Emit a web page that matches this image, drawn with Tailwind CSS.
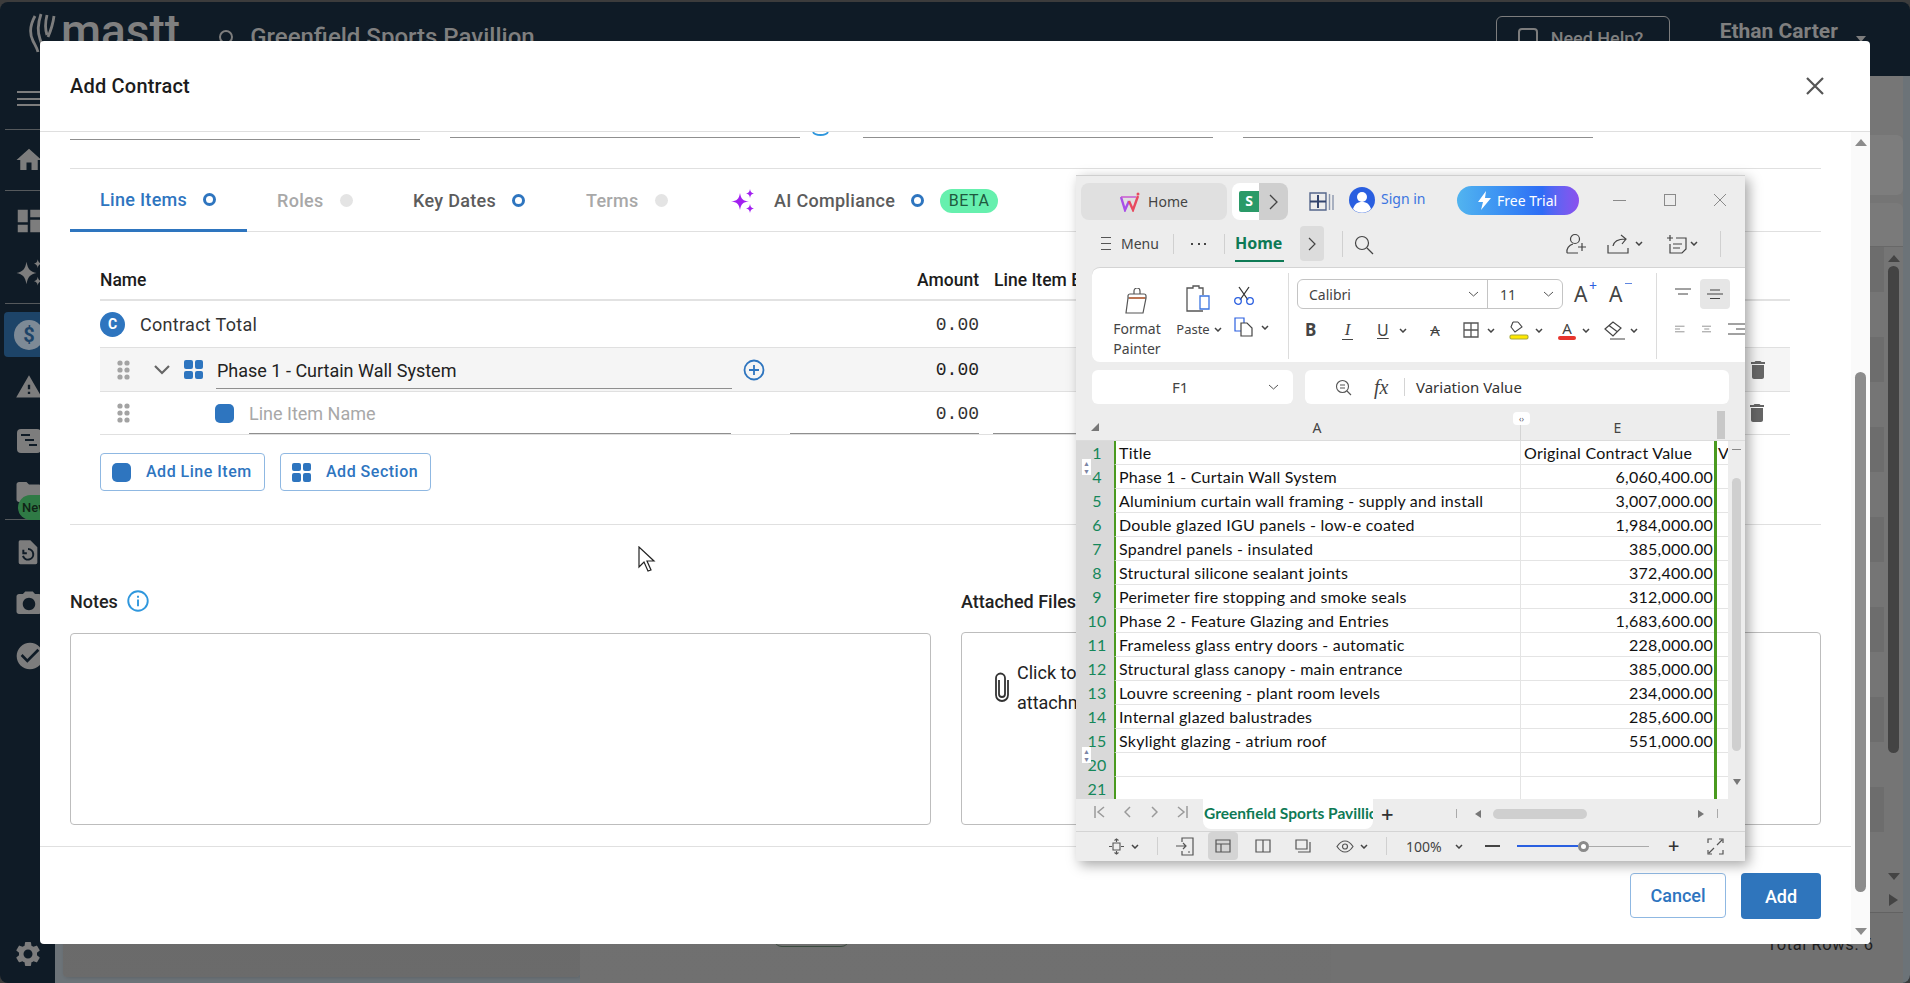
<!DOCTYPE html>
<html lang="en">
  <head>
    <meta charset="UTF-8" />
    <title>Add Contract</title>
    <script src="https://cdn.jsdelivr.net/npm/@tailwindcss/browser@4"></script>
  </head>
  <body class="relative w-[1910px] h-[983px] overflow-hidden bg-[#3c3c3c] pt-[2px] font-[Roboto,sans-serif]">
    <!-- App behind the modal, dimmed -->
    <div class="h-[981px] flex flex-col rounded-lg overflow-hidden bg-[#0f1b26]">
      <header class="h-[74px] shrink-0 flex text-[#7f7f7f]">
        <svg class="ml-[29px] mt-[11px] w-[27px] h-[42px]" viewBox="0 0 27 42" fill="none" stroke="#7d7d7d" stroke-width="2.800">
          <path d="M6 3C1 12 0 20 4 28c2 4 4 7 5 11" />
          <path d="M12 1c-3 9-4 17-1 25l3 9" />
          <path d="M18 2c-2 8-2 14 0 20" />
          <path d="M25 3c-1 8-3 14-6 21" />
        </svg>
        <div class="ml-[5px] mt-[3px] text-[46px] leading-[52px] font-medium">mastt</div>
        <svg class="ml-[38px] mt-[27px] w-[17px] h-[20px]" viewBox="0 0 17 20" fill="none" stroke="#7d7d7d" stroke-width="2"><circle cx="8" cy="8" r="6" /><path d="M12 13l3 5" /></svg>
        <div class="ml-[15px] mt-[20px] text-[24px] leading-[30px] font-medium">Greenfield Sports Pavillion</div>
        <div class="ml-[961px] mt-[14px] w-[174px] h-[60px] border border-[#7d7d7d] rounded-md flex pl-[21px] pt-[11px]">
          <div class="w-[20px] h-[20px] border-2 border-[#7d7d7d] rounded-sm"></div>
          <div class="ml-[13px] text-[18px] leading-[22px] font-medium">Need Help?</div>
        </div>
        <div class="ml-[50px] mt-[17px] text-[21px] leading-[24px] font-bold whitespace-nowrap">Ethan Carter</div>
        <div class="ml-[18px] mt-[34px] w-0 h-0 border-x-[5px] border-x-transparent border-t-[6px] border-t-[#7d7d7d]"></div>
      </header>
      <div class="flex-1 flex min-h-0">
        <nav class="w-[55px] shrink-0 flex flex-col text-[#7d7d7d] pl-[5px]">
          <div class="h-[53px] pl-[12px] pt-[15px]"><div class="w-[26px] h-[15px] border-y-2 border-[#7d7d7d] flex items-center"><div class="w-full h-[2px] bg-[#7d7d7d]"></div></div></div>
          <div class="h-[61px] border-t border-[#55595c] flex items-center pl-[9px]"><svg class="w-[30px] h-[30px]" viewBox="0 0 24 24" fill="#7d7d7d"><path d="M10 20v-6h4v6h5v-8h3L12 3 2 12h3v8z" /></svg></div>
          <div class="h-[113px] border-t border-[#55595c] flex flex-col pl-[9px]">
            <svg class="mt-[15px] w-[30px] h-[30px]" viewBox="0 0 24 24" fill="#7d7d7d"><path d="M3 13h8V3H3v10zm0 8h8v-6H3v6zm10 0h8V11h-8v10zm0-18v6h8V3h-8z" /></svg>
            <svg class="mt-[22px] w-[30px] h-[30px]" viewBox="0 0 24 24" fill="#7d7d7d"><path d="M10 3c1 6 3 8 8 9-5 1-7 3-8 9-1-6-3-8-8-9 5-1 7-3 8-9zM19 1c.4 2.200 1 3 3 3.500-2 .5-2.600 1.300-3 3.500-.4-2.200-1-3-3-3.500 2-.5 2.600-1.300 3-3.500zM19 15c.4 2.200 1 3 3 3.500-2 .5-2.600 1.300-3 3.500-.4-2.200-1-3-3-3.500 2-.5 2.600-1.300 3-3.500z" /></svg>
          </div>
          <div class="h-[216px] border-t border-[#55595c] flex flex-col">
            <div class="mt-[8px] -ml-[1px] h-[45px] rounded-l bg-[#1d4468] flex items-center pl-[10px]"><div class="w-[30px] h-[30px] rounded-full bg-[#7d8a96] flex items-center justify-center text-[20px] font-bold text-[#1d4468]">$</div></div>
            <svg class="mt-[16px] ml-[9px] w-[30px] h-[28px]" viewBox="0 0 24 24" fill="#7d7d7d"><path d="M1 21h22L12 2 1 21zm12-3h-2v-2h2v2zm0-4h-2v-4h2v4z" /></svg>
            <div class="mt-[28px] ml-[12px] w-[24px] h-[24px] rounded bg-[#7d7d7d] flex flex-col gap-[3px] pl-[4px] pt-[5px]"><div class="w-[9px] h-[2px] bg-[#0f1b26]"></div><div class="ml-[4px] w-[9px] h-[2px] bg-[#0f1b26]"></div><div class="ml-[8px] w-[8px] h-[2px] bg-[#0f1b26]"></div></div>
            <div class="relative mt-[24px] ml-[9px] h-[36px]">
              <svg class="w-[30px] h-[30px]" viewBox="0 0 24 24" fill="#7d7d7d"><path d="M10 4H4c-1.100 0-1.990.9-1.990 2L2 18c0 1.100.9 2 2 2h16c1.100 0 2-.9 2-2V8c0-1.100-.9-2-2-2h-8l-2-2z" /></svg>
              <div class="absolute left-[4px] top-[18px] w-[34px] h-[25px] rounded-full bg-[#2f7a45] text-[13px] leading-[25px] font-medium text-center text-[#0f2416]">New</div>
            </div>
          </div>
          <div class="border-t border-[#55595c] flex flex-col pl-[9px]">
            <svg class="mt-[18px] w-[28px] h-[28px]" viewBox="0 0 24 24" fill="#7d7d7d"><path d="M5 2h9l6 6v13a1.500 1.500 0 0 1-1.500 1.500h-13A1.500 1.500 0 0 1 4 21V3.500A1.500 1.500 0 0 1 5 2z" /><path d="M12 9.500a4.500 4.500 0 1 1-4.300 5.800M8 10v3h3" fill="none" stroke="#0f1b26" stroke-width="1.700" /></svg>
            <svg class="mt-[23px] w-[30px] h-[30px]" viewBox="0 0 24 24" fill="#7d7d7d"><path d="M9 2 7.170 4H4c-1.100 0-2 .9-2 2v12c0 1.100.9 2 2 2h16c1.100 0 2-.9 2-2V6c0-1.100-.9-2-2-2h-3.170L15 2H9zm3 15c-2.760 0-5-2.240-5-5s2.240-5 5-5 5 2.240 5 5-2.240 5-5 5z" /></svg>
            <svg class="mt-[21px] w-[32px] h-[32px]" viewBox="0 0 24 24" fill="#7d7d7d"><path d="M12 2C6.480 2 2 6.480 2 12s4.480 10 10 10 10-4.480 10-10S17.520 2 12 2zm-2 15l-5-5 1.410-1.410L10 14.170l7.590-7.590L19 8l-9 9z" /></svg>
          </div>
          <svg class="mt-auto mb-[14px] ml-[8px] w-[30px] h-[30px]" viewBox="0 0 24 24" fill="#7d7d7d"><path d="M19.140 12.940c.04-.3.06-.61.06-.94 0-.32-.02-.64-.07-.94l2.030-1.580a.49.49 0 0 0 .12-.61l-1.920-3.320a.488.488 0 0 0-.59-.22l-2.390.96c-.5-.38-1.030-.7-1.620-.94l-.36-2.540a.484.484 0 0 0-.48-.41h-3.840c-.24 0-.43.17-.47.41l-.36 2.540c-.59.24-1.130.57-1.620.94l-2.390-.96c-.22-.08-.47 0-.59.22L2.740 8.870c-.12.21-.08.47.12.61l2.030 1.580c-.05.3-.09.63-.09.94s.02.64.07.94l-2.030 1.580a.49.49 0 0 0-.12.61l1.920 3.320c.12.22.37.29.59.22l2.390-.96c.5.38 1.030.7 1.620.94l.36 2.540c.05.24.24.41.48.41h3.840c.24 0 .44-.17.47-.41l.36-2.540c.59-.24 1.130-.56 1.620-.94l2.390.96c.22.08.47 0 .59-.22l1.920-3.320c.12-.22.07-.47-.12-.61l-2.010-1.580zM12 15.600c-1.980 0-3.600-1.620-3.600-3.600s1.620-3.600 3.600-3.600 3.600 1.620 3.600 3.600-1.620 3.600-3.600 3.600z" /></svg>
        </nav>
        <main class="flex-1 flex bg-[#6c7378] min-w-0">
          <div class="w-[517px] mb-[6px] ml-[8px] rounded-b bg-gradient-to-b from-[#5a5a5a] to-[#6b6b6b] shadow-[2px_0_4px_rgba(0,0,0,0.2)]"></div>
          <div class="w-[751px] flex flex-col bg-gradient-to-b from-[#6a6a6a] to-[#707070]">
            <div class="mt-[846px] ml-[194px] w-[75px] h-[25px] rounded-b-lg border-b border-[#3a4a3e]"></div>
          </div>
          <div class="w-[572px] bg-[#757575] flex flex-col">
            <div class="h-[59px] shrink-0 bg-[#767676]"></div>
            <div class="h-[60px] shrink-0 bg-[#7d7d7d] rounded-r-md"></div>
            <div class="mt-[8px] h-[44px] shrink-0 bg-[#7a7a7a] rounded-tr-md border-b border-[#686868]"></div>
            <div class="flex-1 flex min-h-0 overflow-hidden">
              <div class="flex-1 flex flex-col">
                <div class="h-[45px] shrink-0 bg-[#6d6d6d]"></div><div class="h-[45px] shrink-0"></div>
                <div class="h-[45px] shrink-0 bg-[#6d6d6d]"></div><div class="h-[45px] shrink-0"></div>
                <div class="h-[45px] shrink-0 bg-[#6d6d6d]"></div><div class="h-[45px] shrink-0"></div>
                <div class="h-[45px] shrink-0 bg-[#6d6d6d]"></div><div class="h-[45px] shrink-0"></div>
                <div class="h-[45px] shrink-0 bg-[#6d6d6d]"></div><div class="h-[45px] shrink-0"></div>
                <div class="h-[45px] shrink-0 bg-[#6d6d6d]"></div><div class="h-[45px] shrink-0"></div>
                <div class="h-[45px] shrink-0 bg-[#6d6d6d]"></div><div class="h-[45px] shrink-0"></div>
              </div>
              <div class="w-[19px] shrink-0 flex flex-col items-center">
                <div class="mt-[8px] w-0 h-0 border-x-[6px] border-x-transparent border-b-[7px] border-b-[#444444]"></div>
                <div class="mt-[4px] w-[11px] h-[487px] rounded-full bg-[#434343]"></div>
                <div class="mt-[120px] w-0 h-0 border-x-[6px] border-x-transparent border-t-[7px] border-t-[#444444]"></div>
                <div class="mt-[14px] w-0 h-0 border-y-[6px] border-y-transparent border-l-[9px] border-l-[#444444]"></div>
              </div>
            </div>
            <div class="h-[71px] shrink-0 bg-[#717171] border-t border-[#626262] pl-[436px] pt-[20px] text-[16.500px] leading-[24px] tracking-[0.6px] text-[#1d1d1d] whitespace-nowrap">Total Rows: 6</div>
          </div>
        </main>
      </div>
    </div>

    <!-- Add Contract modal -->
    <div class="absolute left-[40px] top-[41px] w-[1830px] h-[903px] bg-white rounded-[4px] flex flex-col overflow-hidden">
      <div class="h-[91px] shrink-0 border-b border-[#dfdfdf] flex items-center justify-between pl-[30px] pr-[46px]">
        <div class="text-[20px] tracking-[0.2px] font-medium text-[#1c1c1c]">Add Contract</div>
        <svg class="w-[18px] h-[18px]" viewBox="0 0 18 18" stroke="#555555" stroke-width="2.200"><path d="M1 1l16 16M17 1L1 17" /></svg>
      </div>
      <div class="flex-1 flex min-h-0">
        <div class="w-[1811px] flex flex-col">
          <div class="flex-1 px-[30px]">
            <!-- Fields scrolled above the fold -->
            <div class="h-[37px] border-b border-[#e0e0e0] flex items-start">
              <div class="w-[350px] h-[8px] border-b border-[#8f8f8f]"></div>
              <div class="ml-[30px] w-[350px] h-[6px] border-b border-[#8f8f8f]"></div>
              <svg class="ml-[12px] w-[17px] h-[4px]" viewBox="0 0 17 4" fill="none" stroke="#2f97dd" stroke-width="1.800"><path d="M1 0c2 4 13 4 15 0" /></svg>
              <div class="ml-[34px] w-[350px] h-[6px] border-b border-[#8f8f8f]"></div>
              <div class="ml-[30px] w-[350px] h-[6px] border-b border-[#8f8f8f]"></div>
            </div>
            <!-- Tabs -->
            <div class="h-[63px] border-b border-[#e0e0e0] flex text-[18px] tracking-[0.3px] font-medium">
              <div class="w-[177px] h-[63px] border-b-[3px] border-[#2e75bf] flex items-center pl-[30px] pt-[1px] text-[#2e75bf]">Line Items<span class="ml-[16px] w-[13px] h-[13px] rounded-full border-[3px] border-[#2e75bf]"></span></div>
              <div class="ml-[30px] w-[136px] flex items-center pt-[1px] text-[#a8a8a8]">Roles<span class="ml-[16px] w-[13px] h-[13px] rounded-full bg-[#e4e4e4]"></span></div>
              <div class="w-[173px] flex items-center pt-[1px] text-[#5c5c5c]">Key Dates<span class="ml-[16px] w-[13px] h-[13px] rounded-full border-[3px] border-[#2e75bf]"></span></div>
              <div class="w-[144px] flex items-center pt-[1px] text-[#a8a8a8]">Terms<span class="ml-[16px] w-[13px] h-[13px] rounded-full bg-[#e4e4e4]"></span></div>
              <div class="flex items-center pt-[1px] text-[#5c5c5c]">
                <svg class="w-[26px] h-[26px]" viewBox="0 0 26 26" fill="#a21ff0"><path d="M10 5c1 6 3 8 9 8.500-6 .5-8 2.500-9 8.500-1-6-3-8-9-8.500 6-.5 8-2.500 9-8.500zM20 1c.5 3 1.500 4 4 4.500-2.500.5-3.500 1.500-4 4.500-.5-3-1.500-4-4-4.500 2.500-.5 3.500-1.500 4-4.500zM20 16c.5 3 1.500 4 4 4.500-2.500.5-3.500 1.500-4 4.500-.5-3-1.500-4-4-4.500 2.500-.5 3.500-1.500 4-4.500z" /></svg>
                <span class="ml-[18px]">AI Compliance</span>
                <span class="ml-[16px] w-[13px] h-[13px] rounded-full border-[3px] border-[#2e75bf]"></span>
                <span class="ml-[16px] w-[58px] h-[24px] rounded-full bg-[#66f0ae] text-[16px] leading-[24px] font-normal tracking-[0.5px] text-center text-[#1f5a3f]">BETA</span>
              </div>
            </div>
            <!-- Line items -->
            <div class="ml-[30px] w-[1690px]">
              <div class="h-[69px] border-b-2 border-[#e2e2e2] flex items-end pb-[6px] text-[17.500px] font-medium text-[#1c1c1c]">
                <div class="w-[816px]">Name</div>
                <div class="w-[63px] text-right">Amount</div>
                <div class="ml-[15px] whitespace-nowrap">Line Item Budget</div>
              </div>
              <div class="h-[46px] flex items-center pt-[1px] text-[18px] text-[#333333]">
                <div class="w-[25px] h-[25px] rounded-full bg-[#2e75bf] text-[14px] font-bold leading-[25px] text-center text-white">C</div>
                <div class="ml-[15px] w-[799px] tracking-[0.3px]">Contract Total</div>
                <div class="w-[40px] pt-[1px] flex justify-end font-[Liberation_Mono,monospace] whitespace-nowrap">0.00</div>
              </div>
              <div class="h-[45px] border-y border-[#e0e0e0] bg-[#f5f5f5] flex items-center text-[18px] text-[#222222]">
                <svg class="ml-[17px] w-[13px] h-[20px]" viewBox="0 0 13 20" fill="#a3a3a3"><circle cx="3" cy="3" r="2.600" /><circle cx="10" cy="3" r="2.600" /><circle cx="3" cy="10" r="2.600" /><circle cx="10" cy="10" r="2.600" /><circle cx="3" cy="17" r="2.600" /><circle cx="10" cy="17" r="2.600" /></svg>
                <svg class="ml-[24px] w-[16px] h-[10px]" viewBox="0 0 16 10" fill="none" stroke="#666666" stroke-width="2.200"><path d="M1 1l7 7 7-7" /></svg>
                <div class="ml-[14px] w-[19px] h-[19px] grid grid-cols-2 gap-[2px]"><span class="rounded-[2px] bg-[#2e75bf]"></span><span class="rounded-[2px] bg-[#2e75bf]"></span><span class="rounded-[2px] bg-[#2e75bf]"></span><span class="rounded-[2px] bg-[#2e75bf]"></span></div>
                <div class="ml-[13px] w-[516px] h-[37px] mt-[1px] leading-[38px] border-b border-[#8f8f8f] pl-[1px]">Phase 1 - Curtain Wall System</div>
                <svg class="ml-[11px] w-[22px] h-[22px]" viewBox="0 0 22 22" fill="none" stroke="#2e75bf" stroke-width="1.800"><circle cx="11" cy="11" r="9.500" /><path d="M11 6v10M6 11h10" /></svg>
                <div class="ml-[15px] w-[199px] pt-[2px] text-right font-[Liberation_Mono,monospace]">0.00</div>
                <svg class="ml-[767px] w-[24px] h-[24px]" viewBox="0 0 24 24" fill="#666666"><path d="M6 19c0 1.100.9 2 2 2h8c1.100 0 2-.9 2-2V7H6v12zM19 4h-3.500l-1-1h-5l-1 1H5v2h14V4z" /></svg>
              </div>
              <div class="h-[43px] border-b border-[#e0e0e0] flex items-center text-[18px]">
                <svg class="ml-[17px] w-[13px] h-[20px]" viewBox="0 0 13 20" fill="#a3a3a3"><circle cx="3" cy="3" r="2.600" /><circle cx="10" cy="3" r="2.600" /><circle cx="3" cy="10" r="2.600" /><circle cx="10" cy="10" r="2.600" /><circle cx="3" cy="17" r="2.600" /><circle cx="10" cy="17" r="2.600" /></svg>
                <div class="ml-[85px] w-[19px] h-[19px] rounded-[5px] bg-[#2e75bf]"></div>
                <div class="ml-[15px] w-[482px] h-[38px] mt-[3px] leading-[36px] border-b border-[#8f8f8f] text-[#a8a8a8]">Line Item Name</div>
                <div class="ml-[59px] w-[189px] h-[38px] mt-[3px] leading-[36px] border-b border-[#8f8f8f] text-right font-[Liberation_Mono,monospace] text-[#333333]">0.00</div>
                <div class="ml-[14px] w-[90px] h-[38px] mt-[3px] border-b border-[#8f8f8f]"></div>
                <svg class="ml-[662px] w-[24px] h-[24px]" viewBox="0 0 24 24" fill="#666666"><path d="M6 19c0 1.100.9 2 2 2h8c1.100 0 2-.9 2-2V7H6v12zM19 4h-3.500l-1-1h-5l-1 1H5v2h14V4z" /></svg>
              </div>
              <div class="mt-[18px] flex gap-[15px] text-[16px] font-medium tracking-[0.5px] text-[#2e75bf]">
                <button class="w-[165px] h-[38px] rounded border border-[#8fb8e2] flex items-center pl-[11px]"><span class="w-[19px] h-[19px] rounded-[5px] bg-[#2e75bf]"></span><span class="ml-[15px]">Add Line Item</span></button>
                <button class="w-[151px] h-[38px] rounded border border-[#8fb8e2] flex items-center pl-[11px]"><span class="w-[19px] h-[19px] grid grid-cols-2 gap-[2px]"><span class="rounded-[2px] bg-[#2e75bf]"></span><span class="rounded-[2px] bg-[#2e75bf]"></span><span class="rounded-[2px] bg-[#2e75bf]"></span><span class="rounded-[2px] bg-[#2e75bf]"></span></span><span class="ml-[15px]">Add Section</span></button>
              </div>
            </div>
            <div class="mt-[33px] border-t border-[#e0e0e0]"></div>
            <!-- Notes and attachments -->
            <div class="mt-[64px] flex text-[18px] font-medium text-[#222222]">
              <div class="w-[861px]">
                <div class="h-[24px] flex items-center">Notes
                  <svg class="ml-[9px] w-[22px] h-[22px]" viewBox="0 0 21 21" fill="none" stroke="#2f97dd" stroke-width="1.800"><circle cx="10.500" cy="10.500" r="9.300" /><path d="M10.500 9v6.500M10.500 5.500v2" /></svg>
                </div>
                <div class="mt-[20px] h-[192px] rounded border border-[#bdbdbd]"></div>
              </div>
              <div class="ml-[30px] w-[860px]">
                <div class="h-[24px] flex items-center">Attached Files</div>
                <div class="mt-[19px] h-[193px] rounded border border-[#bdbdbd] flex pl-[31px] pt-[25px] font-normal leading-[30px]">
                  <svg class="mt-[14px] w-[18px] h-[30px]" viewBox="0 0 18 30" fill="none" stroke="#333333" stroke-width="1.800"><path d="M6 8v14a3 3 0 0 0 6 0V6a4.500 4.500 0 0 0-9 0v17a6 6 0 0 0 12 0V8" /></svg>
                  <div class="ml-[6px]">Click to add<br />attachments</div>
                </div>
              </div>
            </div>
          </div>
          <div class="h-[98px] shrink-0 border-t border-[#e0e0e0] flex justify-end gap-[15px] pt-[26px] pr-[30px] text-[18px] font-medium">
            <button class="w-[96px] h-[45px] rounded border border-[#8fb8e2] text-[#2e75bf]">Cancel</button>
            <button class="w-[80px] h-[46px] rounded bg-[#2f75bc] text-white">Add</button>
          </div>
        </div>
        <div class="w-[19px] bg-[#fafafa] flex flex-col items-center">
          <div class="mt-[7px] w-0 h-0 border-x-[6px] border-x-transparent border-b-[7px] border-b-[#8c8c8c]"></div>
          <div class="mt-[226px] w-[11px] h-[520px] rounded-full bg-[#8c8c8c]"></div>
          <div class="mt-[36px] w-0 h-0 border-x-[6px] border-x-transparent border-t-[7px] border-t-[#8c8c8c]"></div>
        </div>
      </div>
    </div>

    <!-- Mouse cursor -->
    <svg class="absolute left-[638px] top-[546px] w-[18px] h-[27px]" viewBox="0 0 18 27" fill="white" stroke="#222222" stroke-width="1.200"><path d="M1 1v20l5-5 4 9 3-1-4-9h7z" /></svg>

    <!-- Spreadsheet window on top -->
    <div class="absolute left-[1076px] top-[175px] w-[669px] h-[686px] overflow-hidden bg-[#ededed] border-t border-[#cfcfcf] shadow-[4px_4px_12px_rgba(0,0,0,0.35)] font-['Noto_Sans',sans-serif] text-[#444444]">
      <!-- Title bar -->
      <div class="h-[46px] flex items-start pl-[5px] pt-[7px] text-[13px]">
        <div class="w-[146px] h-[37px] rounded-lg bg-[#e0e0e0] flex items-center justify-center gap-[8px] text-[14px]">
          <svg class="w-[20px] h-[20px]" viewBox="0 0 20 20" fill="none" stroke-width="2.400"><path d="M1 5l4 13 4-9" stroke="#a84ee8" /><path d="M9 9l4 9 5-14" stroke="#e84a5f" /><path d="M1 5h15" stroke="#c95ad0" stroke-width="1.500" /><circle cx="18" cy="2" r="1.500" fill="#e84a5f" stroke="none" /></svg>
          Home
        </div>
        <div class="ml-[5px] w-[56px] h-[37px] rounded-lg overflow-hidden flex">
          <div class="w-[27px] bg-white pl-[7px] pt-[8px]"><div class="w-[20px] h-[21px] rounded-l-[2px] bg-[#2a9a68] text-[14px] leading-[20px] font-bold text-center text-white">S</div></div>
          <div class="w-[29px] bg-[#cfcfcf] flex items-center justify-center"><svg class="w-[9px] h-[16px]" viewBox="0 0 9 16" fill="none" stroke="#444444" stroke-width="1.300"><path d="M1 1l7 7-7 7" /></svg></div>
        </div>
        <svg class="ml-[21px] mt-[9px] w-[25px] h-[19px]" viewBox="0 0 25 19" fill="none" stroke="#56678c" stroke-width="1.400"><path d="M1 1h16v17H1z" /><path d="M1 9.500h16M9 3v13" stroke="#33446e" stroke-width="2" /><path d="M20.500 2v16M24 3v15" stroke="#8b96ad" /></svg>
        <svg class="ml-[15px] mt-[4px] w-[26px] h-[26px]" viewBox="0 0 26 26"><circle cx="13" cy="13" r="13" fill="#2a5fe0" /><circle cx="13" cy="10" r="5" fill="white" /><path d="M4 22c2-6 5-7 9-7s7 1 9 7c-5 5-13 5-18 0z" fill="white" /></svg>
        <div class="ml-[6px] w-[45px] mt-[6px] text-[14px] leading-[20px] text-[#3b74e0] whitespace-nowrap">Sign in</div>
        <div class="ml-[31px] mt-[3px] w-[122px] h-[29px] rounded-full bg-gradient-to-r from-[#52b4ef] via-[#2f6cf5] via-70% to-[#8a50ee] flex items-center pl-[21px] text-[14px] text-white">
          <svg class="w-[13px] h-[19px]" viewBox="0 0 13 19" fill="white"><path d="M8 0L0 11h5l-2 8 10-12H7z" /></svg>
          <span class="ml-[6px] whitespace-nowrap">Free Trial</span>
        </div>
        <div class="ml-[34px] mt-[17px] w-[13px] h-px bg-[#8a8a8a]"></div>
        <div class="ml-[38px] mt-[11px] w-[12px] h-[12px] border border-[#8a8a8a]"></div>
        <svg class="ml-[38px] mt-[11px] w-[12px] h-[12px]" viewBox="0 0 12 12" stroke="#8a8a8a" stroke-width="1"><path d="M0 0l12 12M12 0L0 12" /></svg>
      </div>
      <!-- Menu bar -->
      <div class="h-[45px] flex items-center pb-[2px] text-[14px]">
        <div class="ml-[25px] w-[10px] h-[13px] border-y border-[#555555] flex items-center"><div class="w-full h-px bg-[#555555]"></div></div>
        <div class="ml-[10px] w-[37px]">Menu</div>
        <div class="ml-[15px] w-px h-[20px] bg-[#d0d0d0]"></div>
        <div class="ml-[17px] w-[15px] flex justify-between"><span class="w-[2px] h-[2px] bg-[#444444]"></span><span class="w-[2px] h-[2px] bg-[#444444]"></span><span class="w-[2px] h-[2px] bg-[#444444]"></span></div>
        <div class="ml-[18px] w-px h-[20px] bg-[#d0d0d0]"></div>
        <div class="ml-[10px] w-[49px] h-[36px] leading-[35px] text-[16px] font-bold border-b-2 border-[#0e7a55] text-[#0e7a55] whitespace-nowrap">Home</div>
        <div class="ml-[16px] w-[24px] h-[35px] rounded bg-[#dcdcdc] flex items-center justify-center"><svg class="w-[8px] h-[14px]" viewBox="0 0 8 14" fill="none" stroke="#444444" stroke-width="1.200"><path d="M1 1l6 6-6 6" /></svg></div>
        <div class="ml-[18px] w-px h-[26px] bg-[#d0d0d0]"></div>
        <svg class="ml-[11px] mt-[2px] w-[20px] h-[20px]" viewBox="0 0 20 20" fill="none" stroke="#444444" stroke-width="1.200"><circle cx="8" cy="8" r="6.500" /><path d="M13 13l6 6" /></svg>
        <svg class="ml-[191px] w-[22px] h-[22px]" viewBox="0 0 22 22" fill="none" stroke="#444444" stroke-width="1.200"><circle cx="10" cy="6" r="4.500" /><path d="M2 20c-1-4 2-8 6-9M2 20h11M17 10v8M13 14h8" /></svg>
        <svg class="ml-[20px] w-[26px] h-[20px]" viewBox="0 0 26 20" fill="none" stroke="#444444" stroke-width="1.200"><path d="M1 11v8h20v-5M6 12c1-5 6-7 12-7M14 1l5 4-4 5" /></svg>
        <svg class="ml-[2px] w-[8px] h-[5px]" viewBox="0 0 8 5" fill="none" stroke="#444444" stroke-width="1.500"><path d="M1 1l3 3 3-3" /></svg>
        <svg class="ml-[24px] w-[20px] h-[20px]" viewBox="0 0 20 20" fill="none" stroke="#444444" stroke-width="1.200"><path d="M3 1v6M0 4h6M3 10v9h12l4-4V4H9M6 10h9M6 14h7" /></svg>
        <svg class="ml-[3px] w-[8px] h-[5px]" viewBox="0 0 8 5" fill="none" stroke="#444444" stroke-width="1.500"><path d="M1 1l3 3 3-3" /></svg>
        <div class="ml-[22px] w-px h-[26px] bg-[#d0d0d0]"></div>
      </div>
      <!-- Ribbon -->
      <div class="ml-[16px] h-[95px] rounded-l-lg bg-white border-t border-[#d4d4d4] flex">
        <div class="w-[197px] shrink-0 mt-[5px] h-[86px] border-r border-[#dcdcdc] flex">
          <div class="ml-[12px] w-[66px] flex flex-col items-center pt-[15px]">
            <svg class="w-[24px] h-[26px]" viewBox="0 0 24 26" fill="none" stroke="#555555" stroke-width="1.200"><path d="M9 6V3a3 3 0 0 1 6 0v3M3 10V8a2 2 0 0 1 2-2h14a2 2 0 0 1 2 2v2M3 10l-2 15h17l3-15z" /><path d="M4 10h16" stroke="#c9551e" /></svg>
            <div class="mt-[5px] text-[14px] leading-[20px] text-center">Format<br />Painter</div>
          </div>
          <div class="w-[56px] flex flex-col items-center pl-[2px] pt-[12px]">
            <svg class="w-[26px] h-[27px]" viewBox="0 0 26 27" fill="none" stroke-width="1.300"><path d="M4 3h3V1h6v2h4v7M17 26H1V3h3" stroke="#555555" /><path d="M14 11h9v13h-9z" stroke="#3b74e0" /></svg>
            <div class="mt-[7px] text-[13px] leading-[20px] flex items-center gap-[4px]">Paste<svg class="w-[8px] h-[5px]" viewBox="0 0 8 5" fill="none" stroke="#444444" stroke-width="1.500"><path d="M1 1l3 3 3-3" /></svg></div>
          </div>
          <div class="flex flex-col pt-[13px]">
            <svg class="ml-[8px] w-[20px] h-[19px]" viewBox="0 0 20 19" fill="none" stroke-width="1.300"><path d="M5 1l9 13M15 1L6 14" stroke="#333333" /><circle cx="4" cy="15" r="3.300" stroke="#2a5fe0" /><circle cx="16" cy="15" r="3.300" stroke="#2a5fe0" /></svg>
            <div class="mt-[12px] flex items-center gap-[7px] ml-[8px]">
              <svg class="w-[20px] h-[20px]" viewBox="0 0 20 20" fill="none" stroke-width="1.200"><path d="M7 14H1V1h9v5" stroke="#2a5fe0" /><path d="M7 6h6l5 5v8H7z" stroke="#444444" /></svg>
              <svg class="w-[8px] h-[5px]" viewBox="0 0 8 5" fill="none" stroke="#444444" stroke-width="1.500"><path d="M1 1l3 3 3-3" /></svg>
            </div>
          </div>
        </div>
        <div class="w-[368px] shrink-0 pl-[8px] pt-[6px] border-r border-[#dcdcdc] mt-[5px] h-[86px]">
          <div class="flex items-center">
            <div class="w-[266px] h-[30px] rounded-md border border-[#c4c4c4] flex items-center text-[14px]">
              <div class="w-[190px] h-full border-r border-[#c4c4c4] flex items-center justify-between pl-[11px] pr-[8px]">Calibri<svg class="w-[11px] h-[6px]" viewBox="0 0 11 6" fill="none" stroke="#555555"><path d="M1 1l4.500 4L10 1" /></svg></div>
              <div class="flex-1 flex items-center justify-between pl-[12px] pr-[8px]">11<svg class="w-[11px] h-[6px]" viewBox="0 0 11 6" fill="none" stroke="#555555"><path d="M1 1l4.500 4L10 1" /></svg></div>
            </div>
            <div class="ml-[11px] relative w-[20px] text-[21px] leading-[24px]">A<span class="absolute -right-[3px] -top-[3px] text-[14px] leading-[14px] text-[#2a5fe0]">+</span></div>
            <div class="ml-[15px] relative w-[20px] text-[21px] leading-[24px]">A<span class="absolute -right-[3px] top-[1px] w-[7px] h-px bg-[#5f86e0]"></span></div>
          </div>
          <div class="mt-[9px] flex items-center h-[24px] text-[#444444]">
            <span class="ml-[8px] w-[14px] text-[17px] font-bold">B</span>
            <span class="ml-[23px] w-[11px] text-[17px] italic font-[Liberation_Serif,serif] border-b border-[#444444] leading-[18px] text-center">I</span>
            <span class="ml-[24px] w-[14px] text-[16px] underline underline-offset-2">U</span>
            <svg class="ml-[8px] w-[8px] h-[5px]" viewBox="0 0 8 5" fill="none" stroke="#444444" stroke-width="1.500"><path d="M1 1l3 3 3-3" /></svg>
            <span class="ml-[19px] w-[18px] text-[15px] line-through text-center">A</span>
            <svg class="ml-[19px] w-[16px] h-[16px]" viewBox="0 0 16 16" fill="none" stroke="#555555" stroke-width="1.300"><path d="M1 1h14v14H1zM8 1v14M1 8h14" /></svg>
            <svg class="ml-[8px] w-[8px] h-[5px]" viewBox="0 0 8 5" fill="none" stroke="#444444" stroke-width="1.500"><path d="M1 1l3 3 3-3" /></svg>
            <svg class="ml-[14px] w-[20px] h-[20px]" viewBox="0 0 20 20" fill="none" stroke="#444444" stroke-width="1.100"><path d="M4 2h5M4 2l-2 5 4 5 7-5-4-5" /><rect x="1" y="15" width="18" height="4" rx="1.500" fill="#ffe800" stroke="#a8a83a" /></svg>
            <svg class="ml-[6px] w-[8px] h-[5px]" viewBox="0 0 8 5" fill="none" stroke="#444444" stroke-width="1.500"><path d="M1 1l3 3 3-3" /></svg>
            <span class="ml-[15px] w-[18px] flex flex-col items-center text-[15px] leading-[16px]">A<span class="w-[18px] h-[4px] rounded-[2px] bg-[#e8352e]"></span></span>
            <svg class="ml-[6px] w-[8px] h-[5px]" viewBox="0 0 8 5" fill="none" stroke="#444444" stroke-width="1.500"><path d="M1 1l3 3 3-3" /></svg>
            <svg class="ml-[14px] w-[22px] h-[20px]" viewBox="0 0 22 20" fill="none" stroke="#444444" stroke-width="1.200"><path d="M1 9l8-7 8 6-8 8zM5 5.500l8 6M6 19h15" /></svg>
            <svg class="ml-[4px] w-[8px] h-[5px]" viewBox="0 0 8 5" fill="none" stroke="#444444" stroke-width="1.500"><path d="M1 1l3 3 3-3" /></svg>
          </div>
        </div>
        <div class="flex-1 pl-[18px] pt-[11px] overflow-hidden">
          <div class="flex items-center h-[30px]">
            <svg class="w-[16px] h-[8px] -mt-[4px]" viewBox="0 0 16 8" stroke="#444444"><path d="M0 1h16M3 6h10" /></svg>
            <div class="ml-[9px] w-[30px] h-[30px] rounded bg-[#e6e6e6] flex items-center justify-center"><svg class="w-[16px] h-[11px]" viewBox="0 0 16 11" stroke="#444444"><path d="M3 1h10M0 5h16M3 9.500h10" /></svg></div>
          </div>
          <div class="mt-[14px] flex items-center">
            <svg class="w-[17px] h-[12px]" viewBox="0 0 17 12" stroke="#444444"><path d="M0 1h17M0 6h9M0 11h17" /></svg>
            <svg class="ml-[17px] w-[17px] h-[12px]" viewBox="0 0 17 12" stroke="#444444"><path d="M0 1h17M4 6h9M0 11h17" /></svg>
            <svg class="ml-[17px] w-[17px] h-[12px] shrink-0" viewBox="0 0 17 12" stroke="#444444"><path d="M0 1h17M8 6h9M0 11h17" /></svg>
          </div>
        </div>
      </div>
      <!-- Formula bar -->
      <div class="mt-[8px] h-[34px] flex gap-[12px] pl-[16px] text-[15px]">
        <div class="w-[201px] rounded-md bg-white flex items-center"><span class="ml-[80px]">F1</span><svg class="ml-[80px] w-[11px] h-[6px]" viewBox="0 0 11 6" fill="none" stroke="#555555"><path d="M1 1l4.500 4L10 1" /></svg></div>
        <div class="w-[424px] rounded-md bg-white flex items-center">
          <svg class="ml-[30px] w-[17px] h-[17px]" viewBox="0 0 17 17" fill="none" stroke="#555555" stroke-width="1.100"><circle cx="7.500" cy="7.500" r="6" /><path d="M5 6h5M5 9h5M12 12l4 4" /></svg>
          <span class="ml-[22px] w-[20px] italic text-[20px] font-[Liberation_Serif,serif]">fx</span>
          <span class="ml-[10px] w-px h-[18px] bg-[#d4d4d4]"></span>
          <span class="ml-[11px] whitespace-nowrap text-[#333333]">Variation Value</span>
        </div>
      </div>
      <!-- Column headers -->
      <div class="relative h-[36px] flex items-end text-[14px]">
        <div class="w-[38px] h-[24px] pl-[15px]"><div class="mt-[7px] w-0 h-0 border-b-[8px] border-l-[8px] border-l-transparent border-b-[#777777]"></div></div>
        <div class="w-[407px] h-[24px] text-center leading-[24px] border-r border-[#d4d4d4]">A</div>
        <div class="w-[193px] h-[24px] text-center leading-[24px]">E</div>
        <div class="ml-[3px] mb-[1px] w-[8px] h-[28px] bg-[#c8c8c8]"></div>
        <div class="absolute left-[437px] top-[8px] w-[17px] h-[13px] rounded-sm bg-white text-[8px] leading-[13px] text-center text-[#555566]">‹›</div>
      </div>
      <!-- Sheet rows -->
      <div class="relative h-[359px] overflow-hidden flex font-[Lato,sans-serif] text-[16px] tracking-[0.24px] text-[#111111] border-t border-[#dcdcdc]">
        <div id="sheet" class="w-[652px] shrink-0 bg-white"></div>
        <div class="flex-1 flex flex-col items-center">
          <div class="mt-[8px] w-[9px] h-px bg-[#888888]"></div>
          <div class="mt-[28px] w-[9px] h-[273px] rounded-full bg-[#cfcfcf]"></div>
          <div class="mt-[28px] w-0 h-0 border-x-[4px] border-x-transparent border-t-[6px] border-t-[#777777]"></div>
        </div>
        <div class="absolute left-[6px] top-[18px] w-[9px] h-[16px] bg-white text-[7px] leading-[8px] text-center text-[#7c84a4]">▲<br />▼</div>
        <div class="absolute left-[6px] top-[306px] w-[9px] h-[16px] bg-white text-[7px] leading-[8px] text-center text-[#7c84a4]">▲<br />▼</div>
      </div>
      <!-- Sheet tabs -->
      <div class="h-[33px] flex items-start border-b border-[#d4d4d4] text-[#9a9a9a]">
        <div class="w-[127px] h-[26px] flex items-center justify-between pl-[18px] pr-[15px]">
          <svg class="w-[11px] h-[12px]" viewBox="0 0 11 12" fill="none" stroke="#9a9a9a" stroke-width="1.500"><path d="M1 0v12M10 1L4 6l6 5" /></svg>
          <svg class="w-[7px] h-[12px]" viewBox="0 0 7 12" fill="none" stroke="#9a9a9a" stroke-width="1.500"><path d="M6 1L1 6l5 5" /></svg>
          <svg class="w-[7px] h-[12px]" viewBox="0 0 7 12" fill="none" stroke="#9a9a9a" stroke-width="1.500"><path d="M1 1l5 5-5 5" /></svg>
          <svg class="w-[11px] h-[12px]" viewBox="0 0 11 12" fill="none" stroke="#9a9a9a" stroke-width="1.500"><path d="M10 0v12M1 1l6 5-6 5" /></svg>
        </div>
        <div class="w-[170px] h-[30px] rounded-b-lg bg-white overflow-hidden whitespace-nowrap leading-[28px] font-[Lato,sans-serif] text-[15.500px] font-bold text-[#0e7a55] pl-[1px]">Greenfield Sports Pavillion</div>
        <div class="ml-[8px] text-[22px] leading-[28px] font-medium text-[#333333]">+</div>
        <div class="ml-[62px] mt-[10px] w-px h-[9px] bg-[#aaaaaa]"></div>
        <div class="ml-[18px] mt-[11px] w-0 h-0 border-y-[4px] border-y-transparent border-r-[6px] border-r-[#777777]"></div>
        <div class="ml-[12px] mt-[10px] w-[94px] h-[10px] rounded-full bg-[#cfcfcf]"></div>
        <div class="ml-[111px] mt-[11px] w-0 h-0 border-y-[4px] border-y-transparent border-l-[6px] border-l-[#777777]"></div>
        <div class="ml-[13px] mt-[10px] w-px h-[9px] bg-[#aaaaaa]"></div>
      </div>
      <!-- Status bar -->
      <div class="h-[28px] flex items-center text-[14px]">
        <svg class="ml-[32px] w-[17px] h-[17px]" viewBox="0 0 17 17" fill="none" stroke="#555555" stroke-width="1.100"><path d="M5 5h7v7H5zM8.500 1v3M8.500 13v3M1 8.500h3M13 8.500h3M6.500 2.500l2-1.500 2 1.500M6.500 14.500l2 1.500 2-1.500" /></svg>
        <svg class="ml-[6px] w-[8px] h-[5px]" viewBox="0 0 8 5" fill="none" stroke="#444444" stroke-width="1.500"><path d="M1 1l3 3 3-3" /></svg>
        <div class="ml-[18px] w-px h-[18px] bg-[#d0d0d0]"></div>
        <svg class="ml-[18px] w-[18px] h-[19px]" viewBox="0 0 18 19" fill="none" stroke="#555555" stroke-width="1.200"><path d="M6 5V1h11v17H6v-4M0 9h10M7 6l3 3-3 3M12 15h2" /></svg>
        <div class="ml-[14px] w-[30px] h-[28px] rounded bg-[#d4d4d4] flex items-center justify-center"><svg class="w-[16px] h-[14px]" viewBox="0 0 16 14" fill="none" stroke="#555555" stroke-width="1.200"><path d="M1 1h14v12H1zM1 5h14M6 5v8" /></svg></div>
        <svg class="ml-[17px] w-[16px] h-[14px]" viewBox="0 0 16 14" fill="none" stroke="#555555" stroke-width="1.200"><path d="M1 1h14v12H1zM8 1v12" /></svg>
        <svg class="ml-[24px] w-[16px] h-[14px]" viewBox="0 0 16 14" fill="none" stroke="#555555" stroke-width="1.200"><path d="M1 10V1h11v9zM15 3v10H3" /></svg>
        <svg class="ml-[25px] w-[18px] h-[13px]" viewBox="0 0 18 13" fill="none" stroke="#555555" stroke-width="1.200"><path d="M1 6.500C4 2 7 1 9 1s5 1 8 5.500C14 11 11 12 9 12s-5-1-8-5.500z" /><circle cx="9" cy="6.500" r="2.500" /></svg>
        <svg class="ml-[6px] w-[8px] h-[5px]" viewBox="0 0 8 5" fill="none" stroke="#444444" stroke-width="1.500"><path d="M1 1l3 3 3-3" /></svg>
        <div class="ml-[18px] w-px h-[18px] bg-[#d0d0d0]"></div>
        <div class="ml-[19px] w-[36px]">100%</div>
        <svg class="ml-[13px] w-[8px] h-[5px]" viewBox="0 0 8 5" fill="none" stroke="#444444" stroke-width="1.500"><path d="M1 1l3 3 3-3" /></svg>
        <div class="ml-[22px] w-[15px] h-[2px] bg-[#444444]"></div>
        <div class="ml-[17px] w-[61px] h-[2px] bg-[#2a5fe0]"></div>
        <div class="w-[11px] h-[11px] rounded-full bg-white border-[3px] border-[#8a8a8a]"></div>
        <div class="w-[60px] h-px bg-[#aaaaaa]"></div>
        <div class="ml-[19px] text-[20px] font-medium leading-[20px] text-[#333333]">+</div>
        <svg class="ml-[28px] w-[17px] h-[17px]" viewBox="0 0 17 17" fill="none" stroke="#555555" stroke-width="1.200"><path d="M1 5V1h4M12 1h4v4M16 12v4h-4M5 16H1v-4M10 7l5-5M7 10l-5 5" /></svg>
      </div>
    </div>

    <script>
      const rows = [
        ["1", "Title", "Original Contract Value"],
        ["4", "Phase 1 - Curtain Wall System", "6,060,400.00"],
        ["5", "Aluminium curtain wall framing - supply and install", "3,007,000.00"],
        ["6", "Double glazed IGU panels - low-e coated", "1,984,000.00"],
        ["7", "Spandrel panels - insulated", "385,000.00"],
        ["8", "Structural silicone sealant joints", "372,400.00"],
        ["9", "Perimeter fire stopping and smoke seals", "312,000.00"],
        ["10", "Phase 2 - Feature Glazing and Entries", "1,683,600.00"],
        ["11", "Frameless glass entry doors - automatic", "228,000.00"],
        ["12", "Structural glass canopy - main entrance", "385,000.00"],
        ["13", "Louvre screening - plant room levels", "234,000.00"],
        ["14", "Internal glazed balustrades", "285,600.00"],
        ["15", "Skylight glazing - atrium roof", "551,000.00"],
        ["20", "", ""],
        ["21", "", ""],
      ];
      document.getElementById("sheet").innerHTML = rows
        .map(
          ([num, title, value], i) => `
          <div class="h-[24px] flex leading-[23px]">
            <div class="w-[38px] shrink-0 bg-[#d9d9d9] text-center pl-[4px] text-[#15875a]">${num}</div>
            <div class="w-[407px] shrink-0 border-l-2 border-l-[#4a9a1f] border-r border-r-[#e4e4e4] border-b border-b-[#e4e4e4] pl-[3px] whitespace-nowrap overflow-hidden">${title}</div>
            <div class="w-[193px] shrink-0 border-b border-b-[#e4e4e4] pr-[1px] whitespace-nowrap overflow-hidden ${i === 0 ? "pl-[3px]" : "text-right"}">${value}</div>
            <div class="w-[3px] shrink-0 bg-[#4a9a1f]"></div>
            <div class="flex-1 border-b border-b-[#e4e4e4] pl-[1px] overflow-hidden">${i === 0 ? "V" : ""}</div>
          </div>`
        )
        .join("");
    </script>
  </body>
</html>
